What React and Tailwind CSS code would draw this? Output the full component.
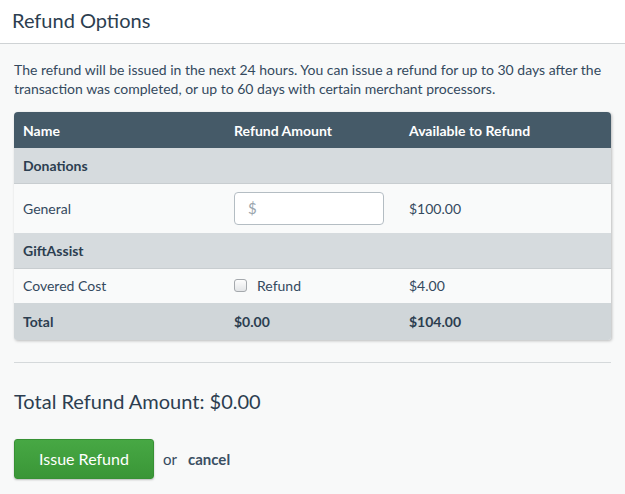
import React from 'react';

const rows = [
    { type: 'group', name: 'Donations' },
    { type: 'input', name: 'General', available: '$100.00' },
    { type: 'group', name: 'GiftAssist' },
    { type: 'check', name: 'Covered Cost', available: '$4.00' },
];

const App = () => {
    return (
        <div className="min-h-[494px] bg-[#f8f9f9] text-[#34495e]" style={{ fontFamily: 'Lato, "Open Sans", sans-serif' }}>
            <div className="h-[44px] bg-white border-b border-[#cfd3d5] px-[12px] flex items-center pb-[3px]">
                <h1 className="text-[20px] text-[#2c3e50]">Refund Options</h1>
            </div>

            <div className="px-[14px] pt-[16px]">
                <p className="text-[14px] leading-[19px] text-[#34495e]">
                    The refund will be issued in the next 24 hours. You can issue a refund for up to 30 days after the transaction was completed, or up to 60 days with certain merchant processors.
                </p>

                {/* refund table */}
                <div className="mt-[14px] rounded-t-[4px] rounded-b-[3px] overflow-hidden shadow-[1px_1px_3px_rgba(0,0,0,0.25)]">
                    <table className="w-full text-[14px] border-collapse">
                        <thead className="bg-[#455a68] text-white">
                            <tr className="h-[36px]">
                                <th className="pl-[9px] text-left font-bold w-[220px]">Name</th>
                                <th className="text-left font-bold w-[175px]">Refund Amount</th>
                                <th className="text-left font-bold">Available to Refund</th>
                            </tr>
                        </thead>
                        <tbody>
                            {rows.map((row, index) => (
                                row.type === 'group' ? (
                                    <tr key={index} className="h-[35px] bg-[#d6dbde] border-b border-[#c8cdd0]">
                                        <td colSpan="3" className="pl-[9px] font-bold text-[#2c3e50]">{row.name}</td>
                                    </tr>
                                ) : (
                                    <tr key={index} className={`${row.type === 'input' ? 'h-[50px]' : 'h-[35px]'} bg-[#f9fafa]`}>
                                        <td className="pl-[9px]">{row.name}</td>
                                        <td>
                                            {row.type === 'input' ? (
                                                <div className="w-[150px] h-[33px] bg-white border border-[#b4bdc3] rounded-[4px] flex items-center pl-[13px] text-[15px] text-[#9aa5ad]">
                                                    $
                                                </div>
                                            ) : (
                                                <label className="flex items-center gap-[10px]">
                                                    <span className="w-[13px] h-[13px] rounded-[3px] border border-[#a5a9ad] bg-gradient-to-b from-[#fdfdfd] to-[#e3e5e7]"></span>
                                                    <span>Refund</span>
                                                </label>
                                            )}
                                        </td>
                                        <td>{row.available}</td>
                                    </tr>
                                )
                            ))}
                            <tr className="h-[37px] bg-[#d0d6d9] font-bold text-[#2c3e50]">
                                <td className="pl-[9px]">Total</td>
                                <td>$0.00</td>
                                <td>$104.00</td>
                            </tr>
                        </tbody>
                    </table>
                </div>

                <div className="mt-[22px] border-t border-[#d5d9db]"></div>

                <h2 className="mt-[23px] text-[20px] text-[#2c3e50]">Total Refund Amount: $0.00</h2>

                <div className="mt-[23px] flex items-center gap-[9px]">
                    <button className="w-[140px] h-[40px] rounded-[3px] bg-gradient-to-b from-[#47a844] to-[#3a9637] border border-[#379134] text-white text-[16px] shadow-[0_1px_2px_rgba(0,0,0,0.25)]">
                        Issue Refund
                    </button>
                    <span className="text-[15px]">or</span>
                    <span className="text-[15px] font-bold text-[#3b4f63] ml-[2px]">cancel</span>
                </div>
            </div>
        </div>
    );
};

export default App;
